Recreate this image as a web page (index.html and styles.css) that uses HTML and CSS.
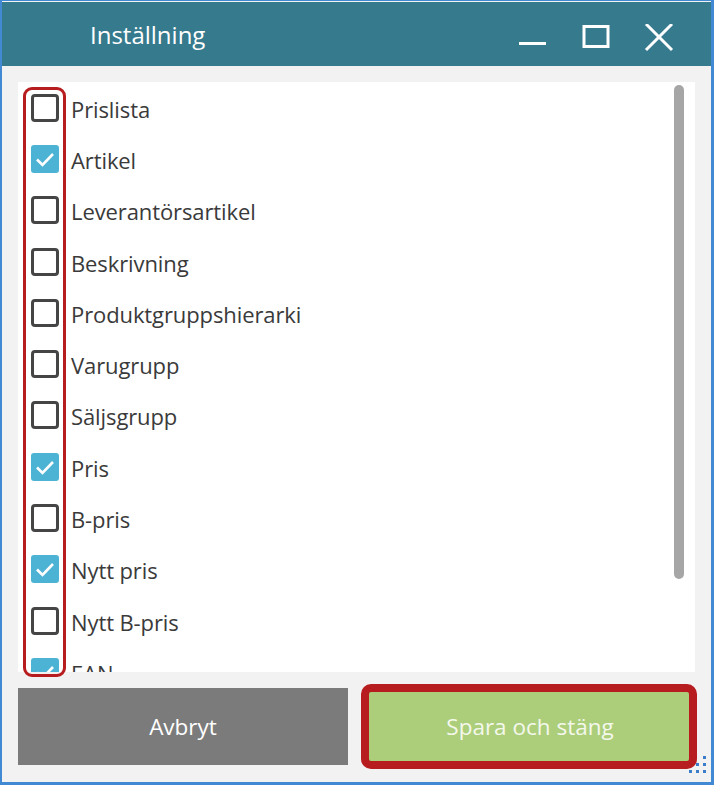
FILE: index.html
```html
<!DOCTYPE html>
<html lang="sv">
<head>
<meta charset="utf-8">
<title>Inställning</title>
<link rel="stylesheet" href="styles.css">
</head>
<body>
<div class="window">
  <header class="titlebar">
    <span class="title">Inställning</span>
    <div class="controls">
      <svg class="ctl" width="30" height="30" viewBox="0 0 30 30"><rect x="1" y="18" width="27" height="3" fill="#fff"/></svg>
      <svg class="ctl" width="30" height="30" viewBox="0 0 30 30"><rect x="3" y="2.5" width="24" height="20" fill="none" stroke="#fff" stroke-width="3"/></svg>
      <svg class="ctl" width="30" height="30" viewBox="0 0 30 30"><path d="M2 0 L28 26 M28 0 L2 26" stroke="#fff" stroke-width="3"/></svg>
    </div>
  </header>
  <main class="content">
    <div class="list-wrap">
      <div class="list">
        <div class="row"><span class="cb"></span><span class="label">Prislista</span></div>
        <div class="row"><span class="cb checked"><svg viewBox="0 0 28 28" width="28" height="28"><path d="M6 14.5 L11.5 20 L22 9" fill="none" stroke="#fff" stroke-width="2.6"/></svg></span><span class="label">Artikel</span></div>
        <div class="row"><span class="cb"></span><span class="label">Leverantörsartikel</span></div>
        <div class="row"><span class="cb"></span><span class="label">Beskrivning</span></div>
        <div class="row"><span class="cb"></span><span class="label">Produktgruppshierarki</span></div>
        <div class="row"><span class="cb"></span><span class="label">Varugrupp</span></div>
        <div class="row"><span class="cb"></span><span class="label">Säljsgrupp</span></div>
        <div class="row"><span class="cb checked"><svg viewBox="0 0 28 28" width="28" height="28"><path d="M6 14.5 L11.5 20 L22 9" fill="none" stroke="#fff" stroke-width="2.6"/></svg></span><span class="label">Pris</span></div>
        <div class="row"><span class="cb"></span><span class="label">B-pris</span></div>
        <div class="row"><span class="cb checked"><svg viewBox="0 0 28 28" width="28" height="28"><path d="M6 14.5 L11.5 20 L22 9" fill="none" stroke="#fff" stroke-width="2.6"/></svg></span><span class="label">Nytt pris</span></div>
        <div class="row"><span class="cb"></span><span class="label">Nytt B-pris</span></div>
        <div class="row"><span class="cb checked"><svg viewBox="0 0 28 28" width="28" height="28"><path d="M6 14.5 L11.5 20 L22 9" fill="none" stroke="#fff" stroke-width="2.6"/></svg></span><span class="label">EAN</span></div>
        <div class="scrollbar"></div>
      </div>
      <div class="highlight-col"></div>
    </div>
    <div class="buttons">
      <button class="btn cancel">Avbryt</button>
      <div class="save-wrap">
        <button class="btn save">Spara och stäng</button>
        <div class="highlight-btn"></div>
      </div>
    </div>
  </main>
  <svg class="grip" width="22" height="22" viewBox="0 0 22 22">
    <g fill="#3b7dc9">
      <rect x="16" y="1" width="3" height="3"/>
      <rect x="9" y="8" width="3" height="3"/><rect x="16" y="8" width="3" height="3"/>
      <rect x="2" y="15" width="3" height="3"/><rect x="9" y="15" width="3" height="3"/><rect x="16" y="15" width="3" height="3"/>
    </g>
  </svg>
</div>
</body>
</html>
```

FILE: styles.css
```css
* { box-sizing: border-box; }
html, body { margin: 0; padding: 0; }
body {
  width: 714px;
  height: 785px;
  overflow: hidden;
  font-family: "Open Sans", "Noto Sans", sans-serif;
  background: #f2f2f2;
}
.window {
  position: relative;
  width: 714px;
  height: 785px;
  border-style: solid;
  border-color: #4189d3;
  border-width: 1px 3px 3px 2px;
  background: #f2f2f2;
  display: flex;
  flex-direction: column;
}
.titlebar {
  height: 65px;
  margin-top: 1px;
  background: #367a8d;
  display: flex;
  align-items: center;
  justify-content: space-between;
  padding: 0 37px 0 88px;
  color: #fff;
}
.title {
  font-size: 24px;
  font-family: "Open Sans", sans-serif;
  margin-top: 1px;
}
.controls {
  display: flex;
  gap: 33px;
  margin-top: 10px;
}
.ctl { display: block; }
.content {
  flex: 1;
  padding: 16px 16px 17px 16px;
  display: flex;
  flex-direction: column;
  gap: 16px;
}
.list-wrap {
  position: relative;
  height: 590px;
}
.list {
  position: relative;
  height: 100%;
  background: #fff;
  overflow: hidden;
}
.row {
  height: 51.3px;
  display: flex;
  align-items: center;
  padding-left: 13px;
  gap: 12px;
}
.cb {
  width: 28px;
  height: 28px;
  border: 3px solid #454545;
  border-radius: 4px;
  background: #fff;
  flex: none;
  display: flex;
}
.cb.checked {
  border: none;
  background: #4db3d4;
  border-radius: 3px;
}
.cb svg { display: block; }
.label {
  font-size: 22px;
  color: #3a3a3a;
  letter-spacing: -0.1px;
  margin-top: 2px;
}
.scrollbar {
  position: absolute;
  right: 11px;
  top: 3px;
  width: 10px;
  height: 494px;
  border-radius: 5px;
  background: #a6a6a6;
}
.highlight-col {
  position: absolute;
  left: 5px;
  top: 5px;
  width: 43px;
  height: 590px;
  border: 3px solid #b71c1f;
  border-radius: 9px;
  pointer-events: none;
}
.buttons {
  display: grid;
  grid-template-columns: 330px 330px;
  column-gap: 17px;
  height: 77px;
}
.btn {
  border: none;
  font-family: "Open Sans", sans-serif;
  font-size: 22.5px;
  color: #fff;
  height: 100%;
  width: 100%;
  padding: 0;
}
.cancel { background: #7b7b7b; }
.save-wrap { position: relative; }
.save { background: #acce7b; color: #f4f8ec; }
.highlight-btn {
  position: absolute;
  left: -4px;
  right: -2px;
  top: -4px;
  bottom: -4px;
  border: 8px solid #b71c1f;
  border-radius: 10px;
  pointer-events: none;
}
.grip {
  position: absolute;
  right: 2px;
  bottom: 5px;
}
```
